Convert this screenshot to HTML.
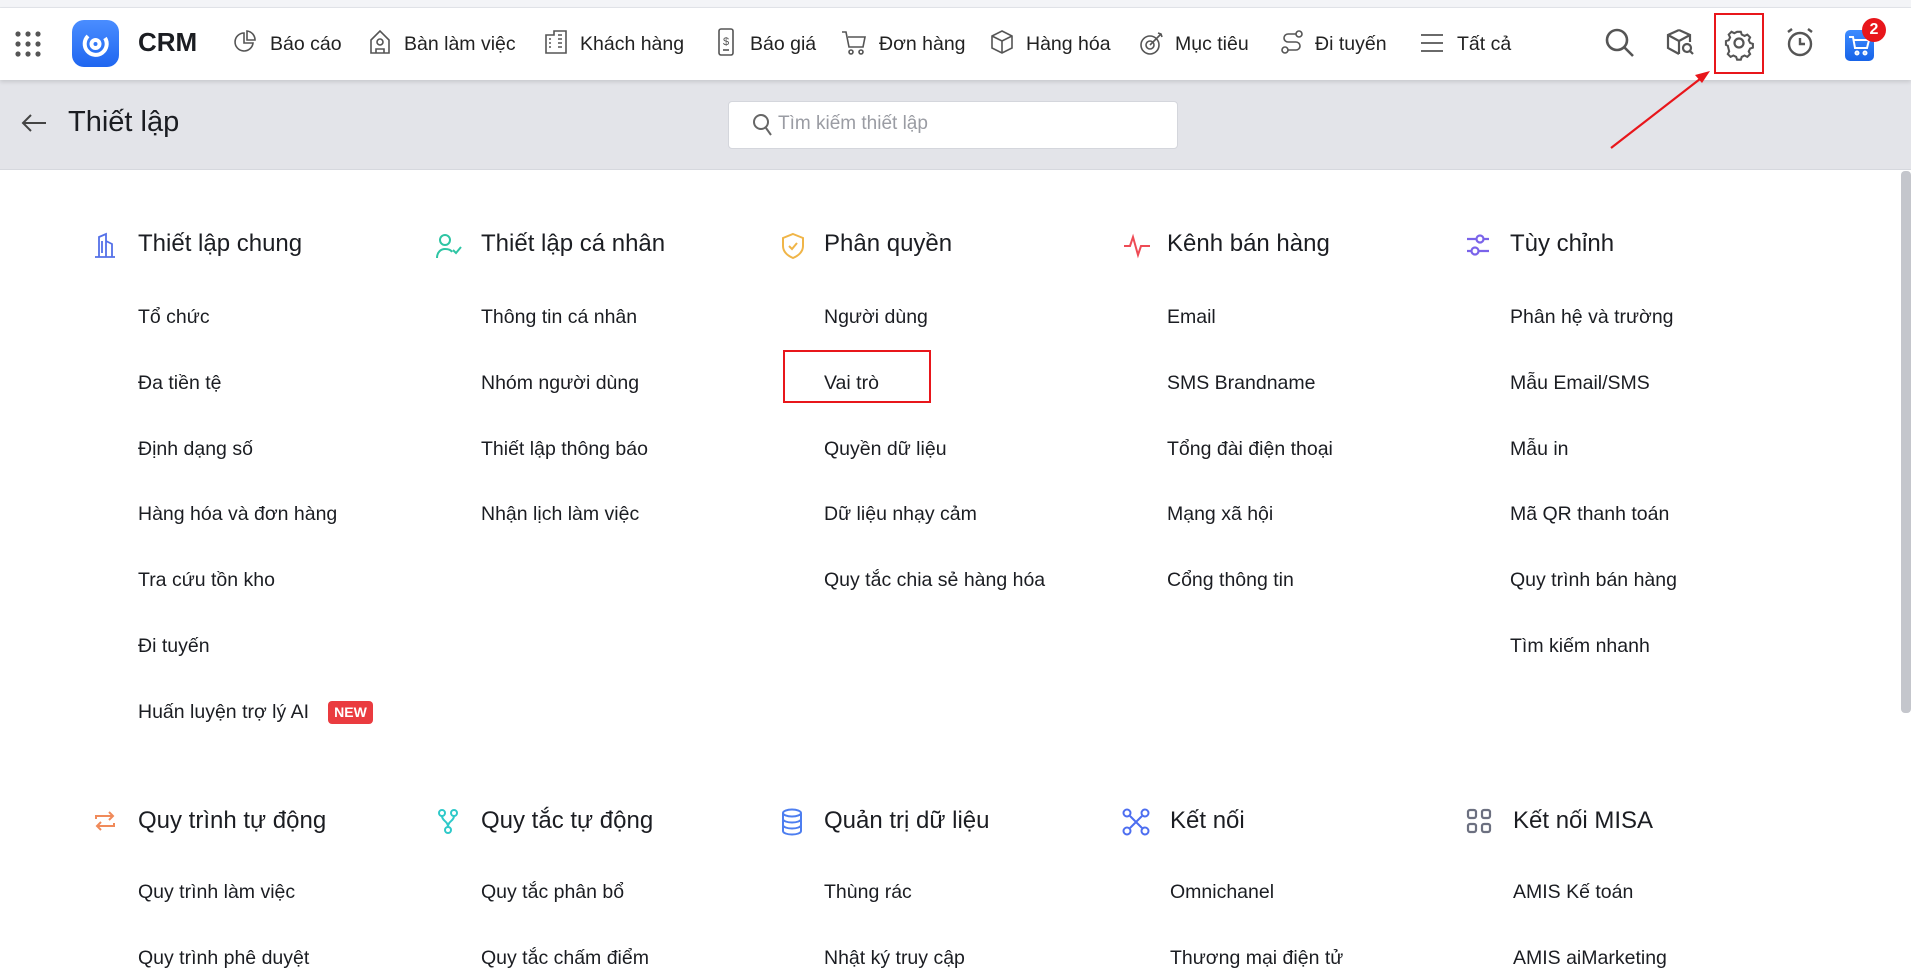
<!DOCTYPE html>
<html><head><meta charset="utf-8"><style>
*{margin:0;padding:0;box-sizing:border-box}
body{width:1911px;height:957px;overflow:hidden;background:#fff;font-family:"Liberation Sans","Noto Sans CJK SC",sans-serif;color:#1b1d22;position:relative}
.abs{position:absolute}
.top{left:0;top:0;width:1911px;height:8px;background:#f3f4f7;border-bottom:1px solid #e3e5ea}
.hdr{left:0;top:8px;width:1911px;height:72px;background:#fff;box-shadow:0 2px 4px rgba(0,0,0,.12);z-index:2}
.nav{font-size:19.5px;color:#222;top:25px;white-space:nowrap}
.band{left:0;top:80px;width:1911px;height:90px;background:#e3e4e9;border-bottom:1px solid #d6d8de}
.t{font-size:19.5px;white-space:nowrap}
.h{font-size:24px;font-weight:500;white-space:nowrap}
svg{position:absolute;overflow:visible}
</style></head><body>
<div class="abs top"></div>
<div class="abs hdr">
<svg style="left:14px;top:22px" width="30" height="30" viewBox="0 0 30 30" fill="#555"><circle cx="4" cy="4" r="2.6"/><circle cx="14" cy="4" r="2.6"/><circle cx="24" cy="4" r="2.6"/><circle cx="4" cy="14" r="2.6"/><circle cx="14" cy="14" r="2.6"/><circle cx="24" cy="14" r="2.6"/><circle cx="4" cy="24" r="2.6"/><circle cx="14" cy="24" r="2.6"/><circle cx="24" cy="24" r="2.6"/></svg>
<div class="abs" style="left:72px;top:12px;width:47px;height:47px;border-radius:12px;background:linear-gradient(#4a8dff,#1f66f0)"></div>
<svg style="left:72px;top:12px" width="47" height="47" viewBox="0 0 47 47" fill="none" stroke="#fff" stroke-width="4"><path d="M16 16 A11 11 0 1 0 33 18"/><circle cx="23.5" cy="24" r="4"/></svg>
<div class="abs" style="left:138px;top:19px;font-size:26px;font-weight:700">CRM</div>
<svg style="left:234px;top:22px" width="22" height="24" viewBox="0 0 22 24" fill="none" stroke="#555" stroke-width="1.6"><path d="M10 3A9 9 0 1 0 19 13H10Z"/><path d="M13 1v9h8A9 9 0 0 0 13 1Z"/></svg>
<div class="abs nav" style="left:270px">Báo cáo</div>
<svg style="left:369px;top:21px" width="22" height="26" viewBox="0 0 22 26" fill="none" stroke="#555" stroke-width="1.6"><path d="M2 11L11 2l9 9v13H2Z"/><circle cx="11" cy="13" r="3"/><path d="M7 24v-4h8v4"/></svg>
<div class="abs nav" style="left:404px">Bàn làm việc</div>
<svg style="left:544px;top:21px" width="24" height="26" viewBox="0 0 24 26" fill="none" stroke="#555" stroke-width="1.6"><path d="M2 24V6h8V2h12v22Z"/><path d="M5 10h2M5 14h2M5 18h2M14 6h4M14 10h4M14 14h4M14 18h4"/></svg>
<div class="abs nav" style="left:580px">Khách hàng</div>
<svg style="left:718px;top:20px" width="16" height="28" viewBox="0 0 16 28" fill="none" stroke="#555" stroke-width="1.6"><rect x="1" y="1" width="14" height="26" rx="2"/><text x="8" y="17" font-size="11" text-anchor="middle" fill="#555" stroke="none">$</text><path d="M5 22h6"/></svg>
<div class="abs nav" style="left:750px">Báo giá</div>
<svg style="left:841px;top:22px" width="26" height="26" viewBox="0 0 26 26" fill="none" stroke="#555" stroke-width="1.6"><path d="M1 2h4l3 15h14l2-10H7"/><circle cx="10" cy="22" r="2"/><circle cx="20" cy="22" r="2"/></svg>
<div class="abs nav" style="left:879px">Đơn hàng</div>
<svg style="left:990px;top:21px" width="24" height="26" viewBox="0 0 24 26" fill="none" stroke="#555" stroke-width="1.6"><path d="M12 2l10 5v12l-10 5-10-5V7Z"/><path d="M2 7l10 5 10-5M12 12v12"/></svg>
<div class="abs nav" style="left:1026px">Hàng hóa</div>
<svg style="left:1139px;top:22px" width="26" height="26" viewBox="0 0 26 26" fill="none" stroke="#555" stroke-width="1.6"><circle cx="11" cy="15" r="9"/><circle cx="11" cy="15" r="4"/><path d="M11 15L22 4M19 3l3 1 1 3"/></svg>
<div class="abs nav" style="left:1175px">Mục tiêu</div>
<svg style="left:1280px;top:21px" width="24" height="26" viewBox="0 0 24 26" fill="none" stroke="#555" stroke-width="1.6"><circle cx="5" cy="21" r="3"/><circle cx="19" cy="5" r="3"/><path d="M8 21h8a4 4 0 0 0 0-8H8a4 4 0 0 1 0-8h8"/></svg>
<div class="abs nav" style="left:1315px">Đi tuyến</div>
<svg style="left:1421px;top:25px" width="22" height="20" viewBox="0 0 22 20" fill="none" stroke="#555" stroke-width="1.8"><path d="M0 2h22M0 10h22M0 18h22"/></svg>
<div class="abs nav" style="left:1457px">Tất cả</div>
<svg style="left:1605px;top:20px" width="30" height="30" viewBox="0 0 30 30" fill="none" stroke="#555" stroke-width="2.6"><circle cx="12" cy="12" r="10"/><path d="M19.5 19.5L28 28"/></svg>
<svg style="left:1666px;top:20px" width="30" height="30" viewBox="0 0 30 30" fill="none" stroke="#555" stroke-width="2.2"><path d="M13 2l11 5v7M13 2L2 7v13l11 6M2 7l11 6 11-6M13 13v13"/><circle cx="21" cy="20" r="4"/><path d="M24 23l3 3"/></svg>
<div class="abs" style="left:1714px;top:5px;width:50px;height:61px;border:2px solid #e8161b"></div>
<svg style="left:1725px;top:21px" width="28" height="28" viewBox="0 0 28 28" fill="none" stroke="#555" stroke-width="2.2"><path d="M12 2h4l1 3 3 1.5 3-1.5 3 3-1.5 3 1.5 3 3 1-0 4-3 1-1.5 3 1.5 3-3 3-3-1.5-3 1.5-1 3h-4l-1-3-3-1.5-3 1.5-3-3 1.5-3L2 17l-2-1v-4l3-1 1.5-3L3 5l3-3 3 1.5L12 2z" transform="scale(0.93) translate(1,1)"/><circle cx="14" cy="14" r="4.5"/></svg>
<svg style="left:1784px;top:18px" width="32" height="32" viewBox="0 0 32 32" fill="none" stroke="#555" stroke-width="2.4"><circle cx="16" cy="18" r="11"/><path d="M16 12v6h5M4 6l4-3M28 6l-4-3"/></svg>
<div class="abs" style="left:1845px;top:22px;width:29px;height:31px;border-radius:5px;background:linear-gradient(#3e8cff,#1763e8)"></div>
<svg style="left:1848px;top:27px" width="24" height="22" viewBox="0 0 24 22" fill="none" stroke="#fff" stroke-width="2"><path d="M1 2h4l2 11h12l2-8H6"/><circle cx="9" cy="18" r="1.5"/><circle cx="17" cy="18" r="1.5"/></svg>
<div class="abs" style="left:1862px;top:10px;width:24px;height:24px;border-radius:12px;background:#e8161b;color:#fff;font-size:16px;font-weight:700;text-align:center;line-height:24px">2</div>
</div>
<div class="abs band"></div>
<svg style="left:21px;top:113px" width="26" height="20" viewBox="0 0 26 20" fill="none" stroke="#444" stroke-width="2"><path d="M25 10H2M10 2L2 10l8 8"/></svg>
<div class="abs" style="left:68px;top:106px;font-size:29px;font-weight:500">Thiết lập</div>
<div class="abs" style="left:728px;top:101px;width:450px;height:48px;background:#fff;border:1px solid #d4d6dc;border-radius:4px"></div>
<svg style="left:752px;top:113px" width="22" height="24" viewBox="0 0 22 24" fill="none" stroke="#666" stroke-width="2"><circle cx="9" cy="9" r="7"/><path d="M14 15l5 7"/></svg>
<div class="abs" style="left:778px;top:113px;font-size:19px;color:#9a9ca3">Tìm kiếm thiết lập</div>
<svg style="left:0;top:0;z-index:3" width="1911" height="200"><line x1="1611" y1="148" x2="1700" y2="79" stroke="#e8161b" stroke-width="2.2"/><path d="M1710 71l-15 4 7 8z" fill="#e8161b"/></svg>
<div class="abs" style="left:1901px;top:171px;width:10px;height:542px;background:#c4c6cc;border-radius:4px"></div>

<svg style="left:93px;top:233px" width="24" height="26" viewBox="0 0 24 26" fill="none" stroke="#5470e8" stroke-width="1.8"><path d="M6 24V4l7-3v23M13 8l6 3v13M2 24h20M9 8v12"/></svg>
<svg style="left:435px;top:232px" width="28" height="28" viewBox="0 0 28 28" fill="none" stroke="#2ec5a4" stroke-width="2"><circle cx="10" cy="8" r="5"/><path d="M2 26c0-6 4-9 8-9s6 1 7 3M18 18l3 3 5-6"/></svg>
<svg style="left:780px;top:232px" width="26" height="28" viewBox="0 0 26 28" fill="none" stroke="#f0b548" stroke-width="2"><path d="M13 2l10 4v8c0 6-5 10-10 12C8 24 3 20 3 14V6Z"/><path d="M9 14l3 3 5-6"/></svg>
<svg style="left:1123px;top:233px" width="28" height="26" viewBox="0 0 28 26" fill="none" stroke="#ee4b55" stroke-width="2"><path d="M1 13h6l3-9 5 18 3-9h9"/></svg>
<svg style="left:1465px;top:231px" width="26" height="28" viewBox="0 0 26 28" fill="none" stroke="#7a63ea" stroke-width="2.2"><path d="M2 8h10M19 8h5M2 20h5M14 20h10"/><circle cx="15" cy="8" r="3.5"/><circle cx="10" cy="20" r="3.5"/></svg>

<div class="abs h" style="left:138px;top:230px">Thiết lập chung</div>
<div class="abs h" style="left:481px;top:230px">Thiết lập cá nhân</div>
<div class="abs h" style="left:824px;top:230px">Phân quyền</div>
<div class="abs h" style="left:1167px;top:230px">Kênh bán hàng</div>
<div class="abs h" style="left:1510px;top:230px">Tùy chỉnh</div>

<div class="abs t" style="left:138px;top:306px">Tổ chức</div>
<div class="abs t" style="left:138px;top:372px">Đa tiền tệ</div>
<div class="abs t" style="left:138px;top:438px">Định dạng số</div>
<div class="abs t" style="left:138px;top:503px">Hàng hóa và đơn hàng</div>
<div class="abs t" style="left:138px;top:569px">Tra cứu tồn kho</div>
<div class="abs t" style="left:138px;top:635px">Đi tuyến</div>
<div class="abs t" style="left:138px;top:701px">Huấn luyện trợ lý AI</div>
<div class="abs" style="left:328px;top:701px;width:45px;height:23px;background:#ea3b3f;color:#fff;border-radius:4px;font-size:14px;font-weight:700;text-align:center;line-height:23px">NEW</div>

<div class="abs t" style="left:481px;top:306px">Thông tin cá nhân</div>
<div class="abs t" style="left:481px;top:372px">Nhóm người dùng</div>
<div class="abs t" style="left:481px;top:438px">Thiết lập thông báo</div>
<div class="abs t" style="left:481px;top:503px">Nhận lịch làm việc</div>

<div class="abs t" style="left:824px;top:306px">Người dùng</div>
<div class="abs t" style="left:824px;top:372px">Vai trò</div>
<div class="abs" style="left:783px;top:350px;width:148px;height:53px;border:2px solid #e8161b"></div>
<div class="abs t" style="left:824px;top:438px">Quyền dữ liệu</div>
<div class="abs t" style="left:824px;top:503px">Dữ liệu nhạy cảm</div>
<div class="abs t" style="left:824px;top:569px">Quy tắc chia sẻ hàng hóa</div>

<div class="abs t" style="left:1167px;top:306px">Email</div>
<div class="abs t" style="left:1167px;top:372px">SMS Brandname</div>
<div class="abs t" style="left:1167px;top:438px">Tổng đài điện thoại</div>
<div class="abs t" style="left:1167px;top:503px">Mạng xã hội</div>
<div class="abs t" style="left:1167px;top:569px">Cổng thông tin</div>

<div class="abs t" style="left:1510px;top:306px">Phân hệ và trường</div>
<div class="abs t" style="left:1510px;top:372px">Mẫu Email/SMS</div>
<div class="abs t" style="left:1510px;top:438px">Mẫu in</div>
<div class="abs t" style="left:1510px;top:503px">Mã QR thanh toán</div>
<div class="abs t" style="left:1510px;top:569px">Quy trình bán hàng</div>
<div class="abs t" style="left:1510px;top:635px">Tìm kiếm nhanh</div>

<svg style="left:93px;top:808px" width="24" height="26" viewBox="0 0 24 26" fill="none" stroke="#f08a5a" stroke-width="2"><path d="M3 11V8h17M16 4l4 4-4 4M21 15v3H4M8 22l-4-4 4-4"/></svg>
<svg style="left:437px;top:808px" width="22" height="26" viewBox="0 0 22 26" fill="none" stroke="#2fc9c9" stroke-width="2"><circle cx="5" cy="5" r="3"/><circle cx="17" cy="5" r="3"/><circle cx="11" cy="22" r="3"/><path d="M5 8c0 5 6 5 6 11M17 8c0 5-6 5-6 11"/></svg>
<svg style="left:780px;top:808px" width="24" height="28" viewBox="0 0 24 28" fill="none" stroke="#4d7ef0" stroke-width="2"><ellipse cx="12" cy="5" rx="9" ry="3.5"/><path d="M3 5v18c0 2 4 3.5 9 3.5s9-1.5 9-3.5V5M3 11c0 2 4 3.5 9 3.5s9-1.5 9-3.5M3 17c0 2 4 3.5 9 3.5s9-1.5 9-3.5"/></svg>
<svg style="left:1122px;top:808px" width="28" height="28" viewBox="0 0 28 28" fill="none" stroke="#4d6ef0" stroke-width="2"><circle cx="5" cy="5" r="3.5"/><circle cx="23" cy="5" r="3.5"/><circle cx="5" cy="23" r="3.5"/><circle cx="23" cy="23" r="3.5"/><path d="M8 8l12 12M20 8L8 20"/></svg>
<svg style="left:1466px;top:808px" width="26" height="26" viewBox="0 0 26 26" fill="none" stroke="#6c7080" stroke-width="2.2"><rect x="2" y="2" width="8" height="8" rx="2"/><rect x="16" y="2" width="8" height="8" rx="2"/><rect x="2" y="16" width="8" height="8" rx="2"/><rect x="16" y="16" width="8" height="8" rx="2"/></svg>

<div class="abs h" style="left:138px;top:807px">Quy trình tự động</div>
<div class="abs h" style="left:481px;top:807px">Quy tắc tự động</div>
<div class="abs h" style="left:824px;top:807px">Quản trị dữ liệu</div>
<div class="abs h" style="left:1170px;top:807px">Kết nối</div>
<div class="abs h" style="left:1513px;top:807px">Kết nối MISA</div>

<div class="abs t" style="left:138px;top:881px">Quy trình làm việc</div>
<div class="abs t" style="left:481px;top:881px">Quy tắc phân bổ</div>
<div class="abs t" style="left:824px;top:881px">Thùng rác</div>
<div class="abs t" style="left:1170px;top:881px">Omnichanel</div>
<div class="abs t" style="left:1513px;top:881px">AMIS Kế toán</div>

<div class="abs t" style="left:138px;top:947px">Quy trình phê duyệt</div>
<div class="abs t" style="left:481px;top:947px">Quy tắc chấm điểm</div>
<div class="abs t" style="left:824px;top:947px">Nhật ký truy cập</div>
<div class="abs t" style="left:1170px;top:947px">Thương mại điện tử</div>
<div class="abs t" style="left:1513px;top:947px">AMIS aiMarketing</div>
</body></html>
